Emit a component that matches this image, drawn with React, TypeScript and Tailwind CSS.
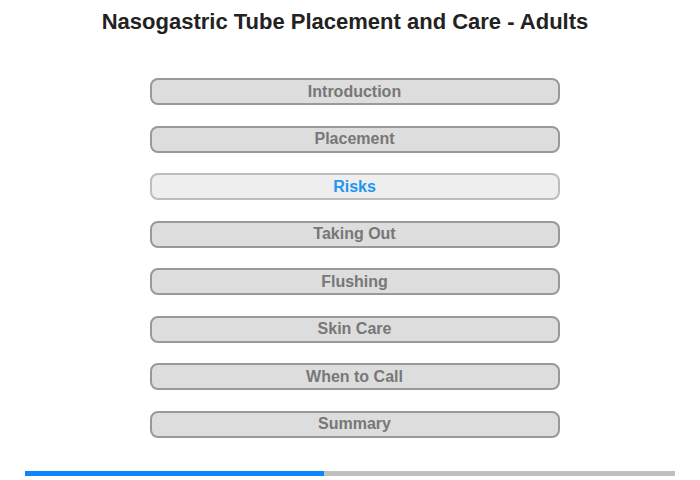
const sections = ['Introduction', 'Placement', 'Risks', 'Taking Out', 'Flushing', 'Skin Care', 'When to Call', 'Summary'];

export default function App() {
  const active = 'Risks';
  return (
    <div className="flex h-[480px] w-[700px] flex-col bg-white font-['Liberation_Sans',Arial,sans-serif]">
      <h1 className="mt-[8px] pr-[10px] text-center text-[22px] font-bold leading-[28px] text-[#222]">
        Nasogastric Tube Placement and Care - Adults
      </h1>
      <nav className="mt-[42px] flex flex-col items-center gap-[20.5px]">
        {sections.map((s) => {
          const on = s === active;
          return (
            <button
              key={s}
              className={
                on
                  ? 'ml-[9px] h-[27px] w-[410px] rounded-[8px] border-2 border-[#bdbdbd] bg-[#eeeeee] text-[16px] font-bold leading-none text-[#2196f3]'
                  : 'ml-[9px] h-[27px] w-[410px] rounded-[8px] border-2 border-[#999999] bg-[#dddddd] text-[16px] font-bold leading-none text-[#777777]'
              }
            >
              {s}
            </button>
          );
        })}
      </nav>
      <div className="mx-[25px] mt-[33px] flex h-[5px] shrink-0 bg-[#c0c0c0]">
        <div className="h-full w-[299px] bg-[#0a84ff]" />
      </div>
    </div>
  );
}
